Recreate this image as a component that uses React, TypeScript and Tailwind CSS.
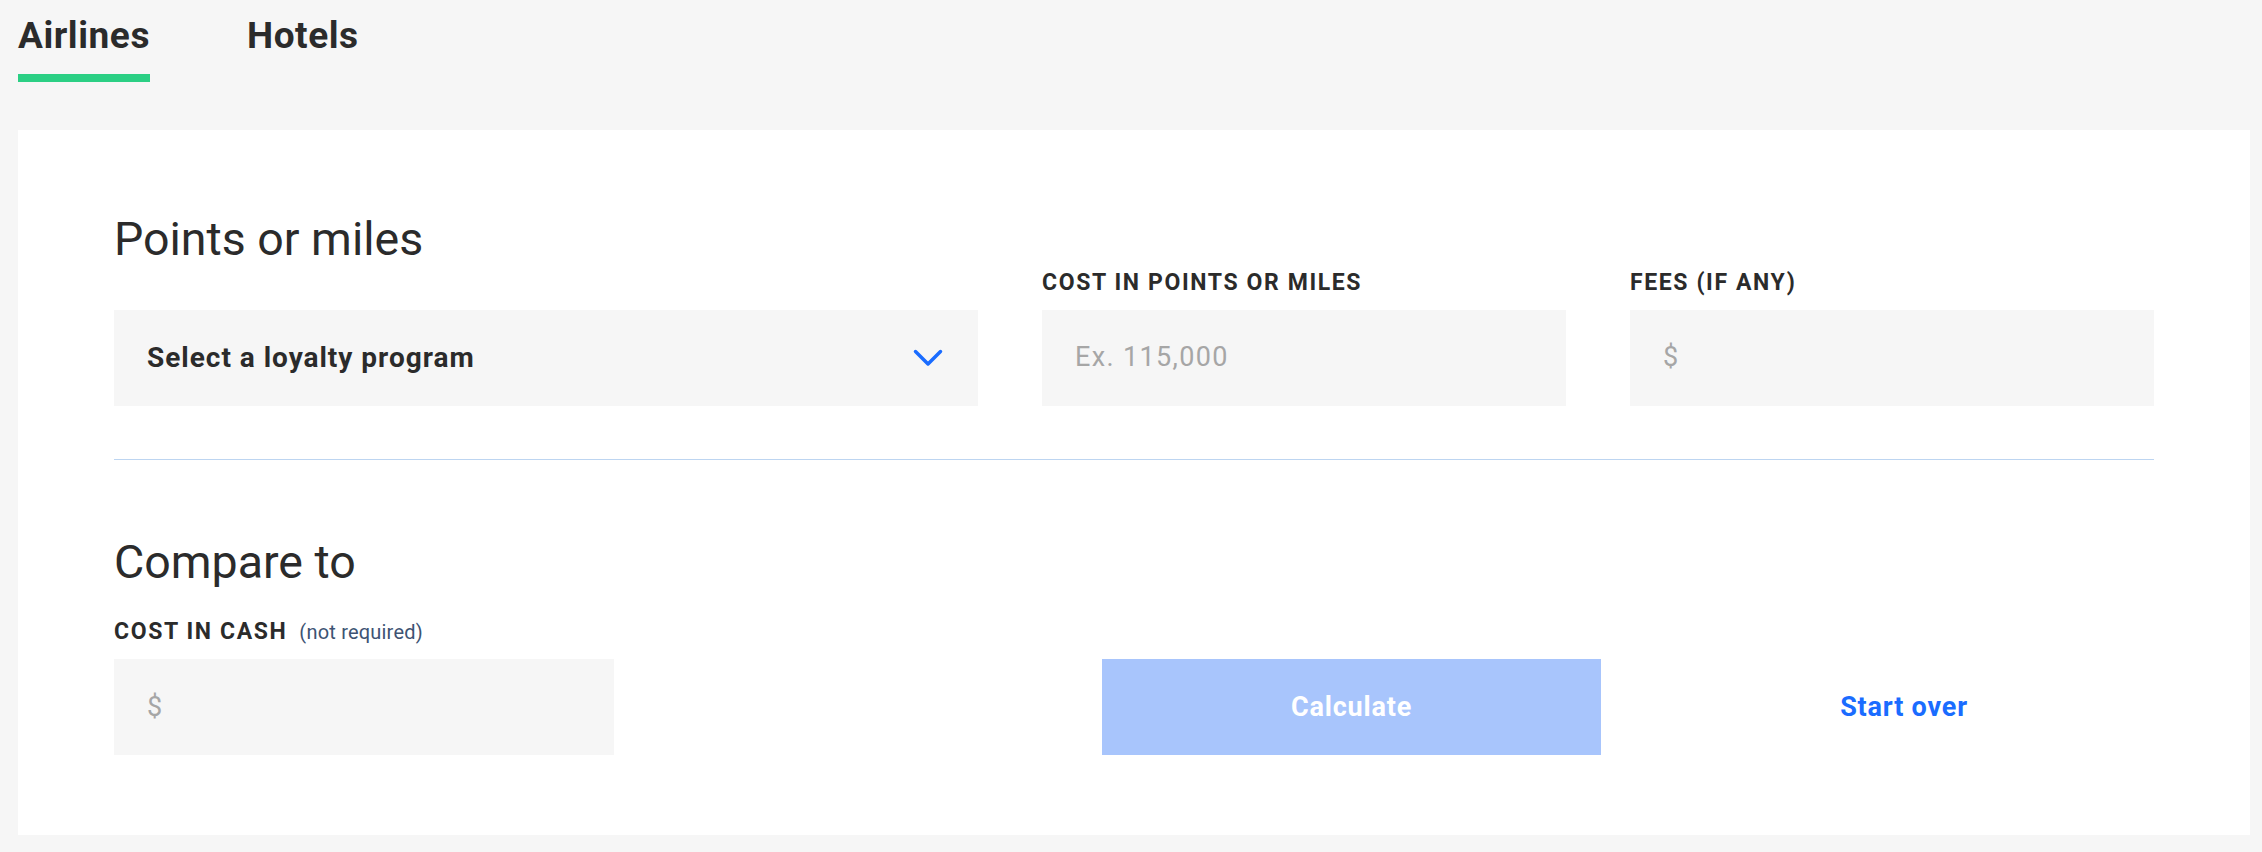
import React from "react";

function Chevron() {
  return (
    <svg width="30" height="18" viewBox="0 0 30 18" fill="none">
      <path d="M2.5 2.5 L15 15 L27.5 2.5" stroke="#1a6cff" strokeWidth="3.5" strokeLinecap="round" strokeLinejoin="round" />
    </svg>
  );
}

function Field(props: { label: string; placeholder: string }) {
  return (
    <div className="flex flex-col">
      <span className="text-[23px] leading-none font-bold tracking-[0.07em] text-[#2b2b2b]">{props.label}</span>
      <div className="mt-[16px] h-[96px] bg-[#f6f6f6] flex items-center pl-[33px]">
        <span className="text-[27px] tracking-[0.05em] text-[#a6a6a6]">{props.placeholder}</span>
      </div>
    </div>
  );
}

export default function App() {
  return (
    <div className="min-h-[852px] bg-[#f6f6f6] pt-[17px] pb-[16px] font-['Roboto',sans-serif] text-[#2b2b2b]">
      {/* tabs */}
      <div className="flex gap-[97px] pl-[18px]">
        <div className="flex flex-col">
          <span className="text-[37px] leading-none font-bold tracking-[0.015em]">Airlines</span>
          <div className="mt-[20px] h-2 w-[132px] bg-[#2bcf84]" />
        </div>
        <span className="text-[37px] leading-none font-bold tracking-[0.015em]">Hotels</span>
      </div>

      <div className="ml-[18px] mr-[12px] mt-[48px] bg-white px-[96px] pt-[86px] pb-[80px]">
        <div className="grid grid-cols-[864px_1fr_1fr] gap-x-[64px] items-end">
          <div className="flex flex-col">
            <h2 className="text-[46.5px] leading-none font-normal">Points or miles</h2>
            <div className="mt-[47px] h-[96px] bg-[#f6f6f6] flex items-center justify-between pl-[33px] pr-[35px]">
              <span className="text-[28px] font-bold tracking-[0.035em]">Select a loyalty program</span>
              <Chevron />
            </div>
          </div>
          <Field label="COST IN POINTS OR MILES" placeholder="Ex. 115,000" />
          <Field label="FEES (IF ANY)" placeholder="$" />
        </div>

        <div className="mt-[53px] h-px bg-[#bdd5f1]" />

        <h2 className="mt-[79px] text-[46.5px] leading-none font-normal">Compare to</h2>
        <div className="mt-[35px] flex items-baseline gap-[12px]">
          <span className="text-[23px] leading-none font-bold tracking-[0.07em]">COST IN CASH</span>
          <span className="text-[20px] leading-none tracking-[0.01em] text-[#3d5373]">(not required)</span>
        </div>

        <div className="mt-[16px] flex justify-between">
          <div className="w-[500px] h-[96px] bg-[#f6f6f6] flex items-center pl-[33px]">
            <span className="text-[27px] text-[#a6a6a6]">$</span>
          </div>
          <div className="flex gap-[53px]">
            <button className="w-[499px] h-[96px] bg-[#a8c5fc] text-white text-[27px] font-bold tracking-[0.03em]">
              Calculate
            </button>
            <button className="w-[500px] h-[96px] text-[#1a6cff] text-[27px] font-bold tracking-[0.03em]">
              Start over
            </button>
          </div>
        </div>
      </div>
    </div>
  );
}
